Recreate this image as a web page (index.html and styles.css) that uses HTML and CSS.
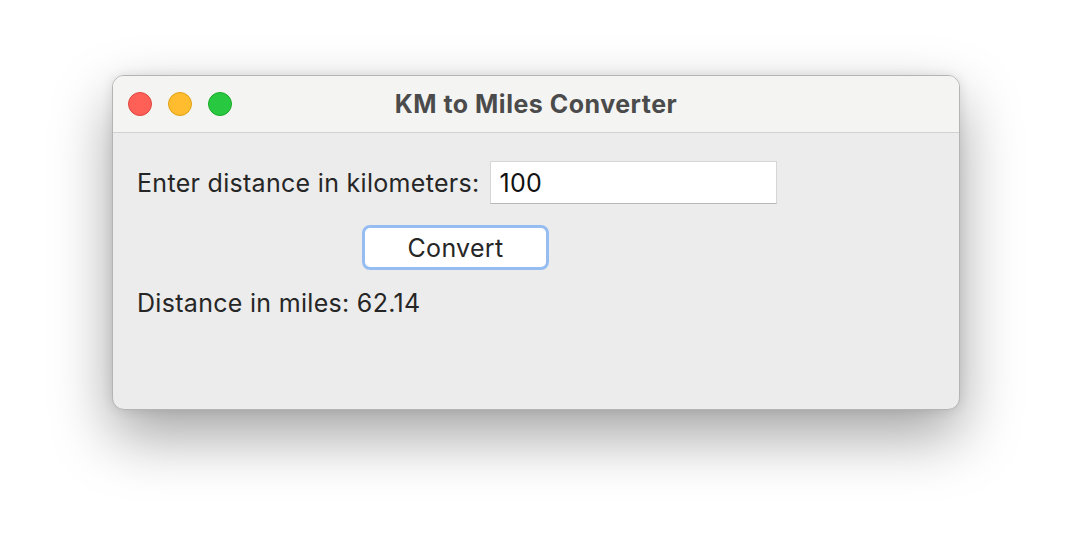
FILE: index.html
```html
<!DOCTYPE html>
<html>
<head>
<meta charset="utf-8">
<link rel="stylesheet" href="styles.css">
</head>
<body>
<div class="window">
  <div class="titlebar">
    <div class="lights">
      <span class="light red"></span>
      <span class="light yellow"></span>
      <span class="light green"></span>
    </div>
    <div class="title">KM to Miles Converter</div>
  </div>
  <div class="content">
    <div class="row">
      <span class="label">Enter distance in kilometers:</span>
      <div class="entry">100</div>
    </div>
    <div class="btnrow">
      <div class="button">Convert</div>
    </div>
    <div class="result">Distance in miles: 62.14</div>
  </div>
</div>
</body>
</html>
```
FILE: styles.css
```css
html, body {
  margin: 0;
  padding: 0;
  background: #ffffff;
}
body {
  width: 1072px;
  height: 558px;
  overflow: hidden;
  font-family: Inter, "Noto Sans", sans-serif;
  color: #262626;
  padding: 75px 0 0 112px;
  box-sizing: border-box;
}
.window {
  width: 848px;
  height: 335px;
  border-radius: 12px;
  overflow: hidden;
  box-sizing: border-box;
  border: 1px solid #b4b4b4;
  background: #ececec;
  box-shadow: 0 26px 60px rgba(0,0,0,0.36), 0 0 12px rgba(0,0,0,0.10);
  display: flex;
  flex-direction: column;
}
.titlebar {
  height: 57px;
  flex: 0 0 57px;
  box-sizing: border-box;
  background: #f4f5f3;
  border-bottom: 1px solid #d2d2d2;
  display: flex;
  align-items: center;
  position: relative;
}
.lights {
  display: flex;
  gap: 16px;
  padding-left: 15px;
}
.light {
  width: 24px;
  height: 24px;
  border-radius: 50%;
  box-sizing: border-box;
}
.red { background: #fe5f57; border: 1px solid #e2463f; }
.yellow { background: #febc2e; border: 1px solid #e1a116; }
.green { background: #28c840; border: 1px solid #1aab29; }
.title {
  position: absolute;
  left: 0;
  right: 0;
  text-align: center;
  font-weight: 700;
  font-size: 25px;
  letter-spacing: 0.5px;
  color: #4b4b4b;
  pointer-events: none;
}
.content {
  padding: 28px 0 0 24px;
}
.row {
  display: flex;
  align-items: center;
  gap: 11px;
}
.label, .result, .button {
  font-size: 25px;
  letter-spacing: 0.3px;
  color: #262626;
}
.entry {
  width: 287px;
  height: 43px;
  box-sizing: border-box;
  background: #ffffff;
  border: 1px solid #d6d6d6;
  border-bottom: 1px solid #b8b8b8;
  font-size: 25px;
  letter-spacing: 0.3px;
  color: #111;
  padding-left: 8px;
  display: flex;
  align-items: center;
}
.btnrow {
  padding: 21px 0 0 225px;
}
.button {
  width: 187px;
  height: 45px;
  box-sizing: border-box;
  border: 3px solid #95bdf1;
  border-radius: 8px;
  background: #ffffff;
  display: flex;
  align-items: center;
  justify-content: center;
}
.result {
  padding-top: 18px;
}
```
